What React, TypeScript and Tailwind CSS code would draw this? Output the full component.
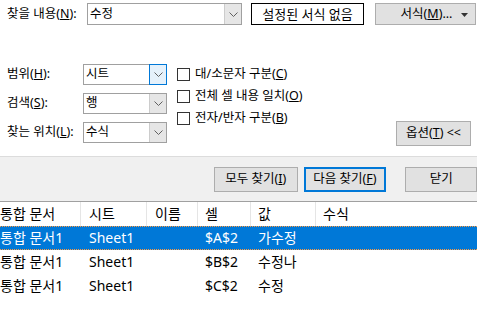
import React from "react";

const Chevron = () => (
  <svg width="9" height="5" viewBox="0 0 9 5" className="block">
    <path d="M0.5 0.5 L4.5 4.5 L8.5 0.5" fill="none" stroke="#606060" strokeWidth="1" />
  </svg>
);

function Combo({ text, w, h, focus }: { text: string; w: string; h: string; focus?: boolean }) {
  return (
    <div className={`flex ${w} ${h} border border-[#a0a0a0] bg-white`}>
      <div className="flex-1 flex items-center pl-[2px] text-[12.5px] leading-none text-black">{text}</div>
      <div
        className={`w-[17px] flex items-center justify-center border-l ${
          focus ? "border border-[#0078d7] bg-[#e5f1fb] -my-px -mr-px w-[18px]" : "border-[#cccccc] bg-[#e6e6e6]"
        }`}
      >
        <Chevron />
      </div>
    </div>
  );
}

function Check({ children }: { children: React.ReactNode }) {
  return (
    <div className="flex items-center h-[22px]">
      <div className="w-[13px] h-[13px] border border-[#333333] bg-white" />
      <span className="ml-[5px] text-[12.5px] leading-none">{children}</span>
    </div>
  );
}

const Btn = ({ children, className }: { children: React.ReactNode; className: string }) => (
  <div className={`flex items-center justify-center border border-[#adadad] bg-[#e1e1e1] text-[12.5px] leading-none ${className}`}>
    {children}
  </div>
);

const rows = [
  ["통합 문서1", "Sheet1", "", "$A$2", "가수정", ""],
  ["통합 문서1", "Sheet1", "", "$B$2", "수정나", ""],
  ["통합 문서1", "Sheet1", "", "$C$2", "수정", ""],
];
const headers = ["통합 문서", "시트", "이름", "셀", "값", "수식"];
const colW = ["w-[81px]", "w-[66px]", "w-[51px]", "w-[53px]", "w-[65px]", "flex-1"];
const colPad = ["pl-0", "pl-[8px]", "pl-[8px]", "pl-[7px]", "pl-[7px]", "pl-[7px]"];

export default function App() {
  return (
    <div className="w-[477px] h-[310px] overflow-hidden bg-white text-black font-['Noto_Sans','Noto_Sans_CJK_KR',sans-serif] flex flex-col">
      {/* top area */}
      <div className="h-[156px] flex flex-col">
        <div className="flex items-center mt-[3px] h-[22px]">
          <div className="w-[87px] pl-[7px] text-[12.5px] leading-none">
            찾을 내용(<u>N</u>):
          </div>
          <Combo text="수정" w="w-[155px]" h="h-[22px]" />
          <div className="ml-[9px] w-[113px] h-[22px] border border-black bg-white flex items-center justify-center text-[13px] leading-none">
            설정된 서식 없음
          </div>
          <Btn className="ml-[11px] w-[101px] h-[22px] relative">
            <span className="ml-[2px]">
              서식(<u>M</u>)...
            </span>
            <svg width="7" height="4" viewBox="0 0 7 4" className="absolute right-[7px] top-[9px]">
              <path d="M0 0 H7 L3.5 4 Z" fill="#333" />
            </svg>
          </Btn>
        </div>

        <div className="flex mt-[39px]">
          <div className="w-[83px] pl-[7px] flex flex-col text-[12.5px] leading-none">
            <div className="h-[21px] flex items-center">범위(<u>H</u>):</div>
            <div className="h-[21px] mt-[8px] flex items-center">검색(<u>S</u>):</div>
            <div className="h-[21px] mt-[8px] flex items-center">찾는 위치(<u>L</u>):</div>
          </div>
          <div className="flex flex-col">
            <Combo text="시트" w="w-[84px]" h="h-[21px]" focus />
            <div className="mt-[8px]">
              <Combo text="행" w="w-[84px]" h="h-[21px]" />
            </div>
            <div className="mt-[8px]">
              <Combo text="수식" w="w-[84px]" h="h-[21px]" />
            </div>
          </div>
          <div className="ml-[10px] -mt-[1px] flex flex-col">
            <Check>대/소문자 구분(<u>C</u>)</Check>
            <Check>전체 셀 내용 일치(<u>O</u>)</Check>
            <Check>전자/반자 구분(<u>B</u>)</Check>
          </div>
          <div className="flex-1 flex justify-end items-end pr-[6px]">
            <Btn className="w-[75px] h-[25px] mb-[-3px]">
              옵션(<u>T</u>) &lt;&lt;
            </Btn>
          </div>
        </div>
      </div>

      {/* button band */}
      <div className="h-[46px] bg-[#f0f0f0] border-t border-[#dcdcdc] border-b border-b-[#a0a0a0] flex items-start pt-[10px]">
        <Btn className="ml-[214px] w-[84px] h-[25px]">
          모두 찾기(<u>I</u>)
        </Btn>
        <div className="ml-[6px] w-[83px] h-[25px] border-2 border-[#0078d7] bg-[#e1e1e1] flex items-center justify-center text-[12.5px] leading-none">
          다음 찾기(<u>F</u>)
        </div>
        <Btn className="ml-[19px] w-[72px] h-[25px]">닫기</Btn>
      </div>

      {/* list */}
      <div className="flex flex-col text-[14px] leading-none">
        <div className="flex h-[24px]">
          {headers.map((h, i) => (
            <div
              key={i}
              className={`${colW[i]} ${colPad[i]} flex items-center ${i < 5 ? "border-r border-[#e5e5e5]" : ""}`}
            >
              {h}
            </div>
          ))}
        </div>
        {rows.map((r, ri) => (
          <div
            key={ri}
            className={`flex h-[24px] ${
              ri === 0 ? "bg-[#0078d7] text-white border-y border-dotted border-[#ff9a40]" : ""
            }`}
          >
            {r.map((c, i) => (
              <div key={i} className={`${colW[i]} ${colPad[i]} ${i === 5 ? "" : "shrink-0"} flex items-center whitespace-nowrap`}>
                {c}
              </div>
            ))}
          </div>
        ))}
      </div>
    </div>
  );
}
